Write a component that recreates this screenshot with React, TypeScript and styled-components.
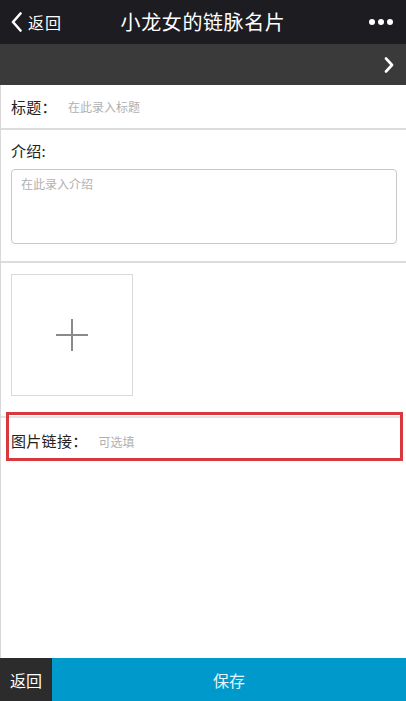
import React from "react";
import styled, { createGlobalStyle } from "styled-components";

const Global = createGlobalStyle`
  html, body { margin: 0; padding: 0; background: #fff; }
  body { font-family: "Noto Sans CJK SC", "Noto Sans", sans-serif; }
  * { box-sizing: border-box; }
`;

const Page = styled.div`
  width: 406px;
  height: 701px;
  display: flex;
  flex-direction: column;
  overflow: hidden;
`;

const NavBar = styled.div`
  height: 44px;
  background: #1d1c21;
  display: grid;
  grid-template-columns: 90px 1fr 90px;
  align-items: center;
  color: #fff;
`;

const Back = styled.div`
  display: flex;
  align-items: center;
  gap: 6px;
  padding-left: 11px;
  font-size: 16px;
  letter-spacing: 1px;
`;

const Title = styled.div`
  text-align: center;
  font-size: 20px;
  letter-spacing: 0.6px;
  line-height: 44px;
`;

const More = styled.div`
  display: flex;
  justify-content: flex-end;
  padding-right: 13px;
  gap: 3px;
`;

const Dot = styled.span`
  width: 6px;
  height: 6px;
  border-radius: 50%;
  background: #fff;
`;

const SubBar = styled.div`
  height: 41px;
  background: #3a3a3a;
  display: flex;
  align-items: center;
  justify-content: flex-end;
  padding-right: 12px;
`;

const Content = styled.div`
  flex: 1;
  border-left: 1px solid #d8d8d8;
  display: flex;
  flex-direction: column;
`;

const FieldRow = styled.div<{ $h: number }>`
  position: relative;
  height: ${(p) => p.$h}px;
  display: flex;
  align-items: center;
  padding-left: 10px;
`;

const Label = styled.span`
  font-size: 15px;
  line-height: 22px;
  color: #222;
  letter-spacing: 0.3px;
`;

const Placeholder = styled.span<{ $ml: number }>`
  font-size: 12px;
  color: #b0b0b0;
  margin-left: ${(p) => p.$ml}px;
`;

const Divider = styled.div`
  height: 2px;
  background: #dcdcdc;
`;

const IntroSection = styled.div`
  padding: 10px 9px 17px 10px;
  display: flex;
  flex-direction: column;
  gap: 7px;
`;

const TextArea = styled.div`
  height: 75px;
  border: 1px solid #c8c8c8;
  border-radius: 4px;
  padding: 6px 9px;
  font-size: 12px;
  color: #b0b0b0;
  line-height: 16px;
`;

const ImageSection = styled.div`
  padding: 11px 10px 20px 10px;
`;

const AddBox = styled.div`
  width: 122px;
  height: 122px;
  border: 1px solid #dadada;
  display: flex;
  align-items: center;
  justify-content: center;
`;

const LinkWrap = styled.div`
  position: relative;
`;

const Highlight = styled.div`
  position: absolute;
  left: 5px;
  top: -4px;
  width: 397px;
  height: 49px;
  border: 3px solid #d7393d;
  pointer-events: none;
`;

const LinkDivider = styled.div`
  height: 2px;
  background: #e3e3e3;
  margin-right: 6px;
`;

const BottomBar = styled.div`
  height: 43px;
  display: flex;
`;

const BottomBack = styled.div`
  width: 52px;
  background: #2c2c2c;
  color: #fff;
  font-size: 16px;
  display: flex;
  align-items: center;
  justify-content: center;
`;

const Save = styled.div`
  flex: 1;
  background: #0099cc;
  color: #e4f6fc;
  font-size: 16px;
  display: flex;
  align-items: center;
  justify-content: center;
`;

export default function App() {
  return (
    <>
      <Global />
      <Page>
        <NavBar>
          <Back>
            <svg width="11" height="20" viewBox="0 0 11 20">
              <path d="M9.5 1.5 L2 10 L9.5 18.5" fill="none" stroke="#fff" strokeWidth="2.6" strokeLinecap="round" strokeLinejoin="round" />
            </svg>
            <span>返回</span>
          </Back>
          <Title>小龙女的链脉名片</Title>
          <More>
            <Dot />
            <Dot />
            <Dot />
          </More>
        </NavBar>
        <SubBar>
          <svg width="10" height="16" viewBox="0 0 10 16">
            <path d="M2 1.5 L8 8 L2 14.5" fill="none" stroke="#fff" strokeWidth="2.6" strokeLinecap="round" strokeLinejoin="round" />
          </svg>
        </SubBar>
        <Content>
          <FieldRow $h={43}>
            <Label>标题：</Label>
            <Placeholder $ml={11}>在此录入标题</Placeholder>
          </FieldRow>
          <Divider />
          <IntroSection>
            <Label>介绍:</Label>
            <TextArea>在此录入介绍</TextArea>
          </IntroSection>
          <Divider />
          <ImageSection>
            <AddBox>
              <svg width="34" height="34" viewBox="0 0 34 34">
                <path d="M17 1 V33 M1 17 H33" stroke="#8a8a8a" strokeWidth="2" />
              </svg>
            </AddBox>
          </ImageSection>
          <LinkWrap>
            <LinkDivider />
            <FieldRow $h={46}>
              <Label>图片链接：</Label>
              <Placeholder $ml={11}>可选填</Placeholder>
            </FieldRow>
            <Highlight />
          </LinkWrap>
        </Content>
        <BottomBar>
          <BottomBack>返回</BottomBack>
          <Save>保存</Save>
        </BottomBar>
      </Page>
    </>
  );
}
